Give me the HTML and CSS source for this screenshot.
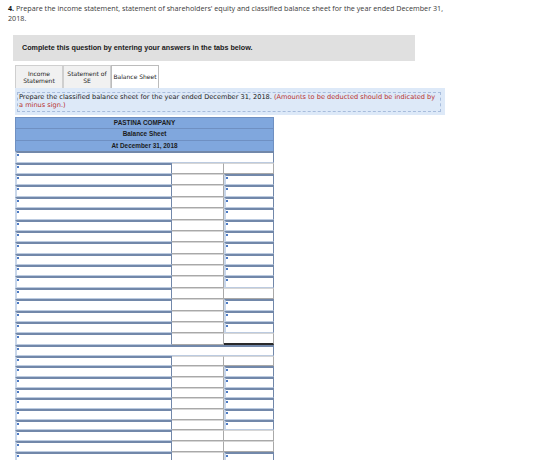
FILE: index.html
```html
<!DOCTYPE html>
<html>
<head>
	<meta charset="utf-8">
	<title>Balance Sheet</title>
	<link rel="stylesheet" href="styles.css">
</head>
<body>
	<p class="question"><b>4.</b> Prepare the income statement, statement of shareholders' equity and classified balance sheet for the year ended December 31,<br>2018.</p>

	<div class="notice">Complete this question by entering your answers in the tabs below.</div>

	<div class="tabs">
		<div class="tab">Income<br>Statement</div>
		<div class="tab">Statement of<br>SE</div>
		<div class="tab active">Balance Sheet</div>
	</div>

	<div class="hint">
		<div class="hint_inner">Prepare the classified balance sheet for the year ended December 31, 2018. <span class="red">(Amounts to be deducted should be indicated by<br>a minus sign.)</span></div>
	</div>

	<div class="sheet sheet_top">
		<div class="head">PASTINA COMPANY</div>
		<div class="head">Balance Sheet</div>
		<div class="head">At December 31, 2018</div>
		<div class="full field"></div>
		<!-- row 1 -->
		<div class="field"></div><div class="plain"></div><div class="plain"></div>
		<!-- rows 2-11 -->
		<div class="field"></div><div class="plain"></div><div class="field"></div>
		<div class="field"></div><div class="plain"></div><div class="field"></div>
		<div class="field"></div><div class="plain"></div><div class="field"></div>
		<div class="field"></div><div class="plain"></div><div class="field"></div>
		<div class="field"></div><div class="plain"></div><div class="field"></div>
		<div class="field"></div><div class="plain"></div><div class="field"></div>
		<div class="field"></div><div class="plain"></div><div class="field"></div>
		<div class="field"></div><div class="plain"></div><div class="field"></div>
		<div class="field"></div><div class="plain"></div><div class="field"></div>
		<div class="field"></div><div class="plain"></div><div class="field"></div>
		<!-- row 12 -->
		<div class="field"></div><div class="plain"></div><div class="plain"></div>
		<!-- rows 13-15 -->
		<div class="field"></div><div class="plain"></div><div class="field"></div>
		<div class="field"></div><div class="plain"></div><div class="field"></div>
		<div class="field"></div><div class="plain"></div><div class="field"></div>
		<!-- total -->
		<div class="field"></div><div class="plain"></div><div class="plain total"></div>
	</div>

	<div class="sheet sheet_bottom">
		<div class="full field"></div>
		<div class="field"></div><div class="plain"></div><div class="plain"></div>
		<div class="field"></div><div class="plain"></div><div class="field"></div>
		<div class="field"></div><div class="plain"></div><div class="field"></div>
		<div class="field"></div><div class="plain"></div><div class="field"></div>
		<div class="field"></div><div class="plain"></div><div class="field"></div>
		<div class="field"></div><div class="plain"></div><div class="field"></div>
		<div class="field"></div><div class="plain"></div><div class="field"></div>
		<div class="field"></div><div class="plain"></div><div class="plain"></div>
		<div class="field"></div><div class="plain"></div><div class="plain"></div>
		<div class="field"></div><div class="plain"></div><div class="field"></div>
	</div>
</body>
</html>
```

FILE: styles.css
```css
body{
	margin: 0;
	padding: 3px 0 0 8px;
	background: white;
	overflow: hidden;
}
.question{
	margin: 0;
	font-family: 'Open Sans', sans-serif;
	font-size: 7.2px;
	line-height: 10px;
	color: #3a3a3a;
}
.question b{
	color: #111;
}
.notice{
	margin: 12px 0 0 5px;
	width: 393px;
	height: 26px;
	padding-left: 9px;
	background-color: #e0e0e0;
	font-family: 'Liberation Sans', sans-serif;
	font-weight: bold;
	font-size: 7.2px;
	line-height: 25px;
	color: #1a1a1a;
}
.tabs{
	display: flex;
	margin: 4px 0 0 7px;
	height: 23px;
}
.tab{
	box-sizing: border-box;
	width: 48px;
	height: 23px;
	display: flex;
	align-items: center;
	justify-content: center;
	text-align: center;
	background-color: #f1f1f1;
	border: 1px solid #cfcfcf;
	border-bottom: none;
	font-family: 'DejaVu Sans', sans-serif;
	font-size: 6px;
	line-height: 7.5px;
	color: #222;
}
.tab.active{
	background-color: white;
	border-color: #bcbcbc;
}
.hint{
	box-sizing: border-box;
	margin-left: 7px;
	width: 430px;
	height: 27px;
	padding: 4px 4px 0 2px;
	background-color: #dde9f8;
}
.hint_inner{
	height: 17px;
	padding: 1px 1px 0 1px;
	border: 1px dashed #a7bcdc;
	font-family: 'DejaVu Sans', sans-serif;
	font-size: 6.6px;
	line-height: 7.5px;
	color: #222;
	white-space: nowrap;
}
.red{
	color: #b8312f;
}
.sheet{
	display: grid;
	grid-template-columns: 157px 52px 50px;
	margin-left: 7px;
	width: 259px;
}
.sheet_top{
	margin-top: 2px;
	grid-auto-rows: 11.4px;
}
.sheet_bottom{
	grid-auto-rows: 10.7px;
}
.sheet div{
	box-sizing: border-box;
}
.head{
	grid-column: 1 / -1;
	background-color: #80a7dd;
	border-top: 1px solid #6f90c2;
	border-left: 1px solid #6f90c2;
	border-right: 1px solid #6f90c2;
	text-align: center;
	font-family: 'Liberation Sans', sans-serif;
	font-weight: bold;
	font-size: 6.4px;
	line-height: 10px;
	color: #1c1c1c;
}
.full{
	grid-column: 1 / -1;
}
.field{
	background: linear-gradient(#4d7bc4, #4d7bc4) no-repeat 0 1px / 2px 2px, white;
	border-top: 2px solid #7288aa;
	border-left: 2px solid #c9d7ea;
	border-right: 1px solid #7288aa;
	border-bottom: 1px solid #bccbe0;
}
.plain{
	background-color: white;
	border-top: 1px solid #d6d6d6;
	border-right: 1px solid #a9a9a9;
	border-bottom: 1px solid #a9a9a9;
}
.total{
	border-bottom: 2px solid #2a2a2a;
}
```
